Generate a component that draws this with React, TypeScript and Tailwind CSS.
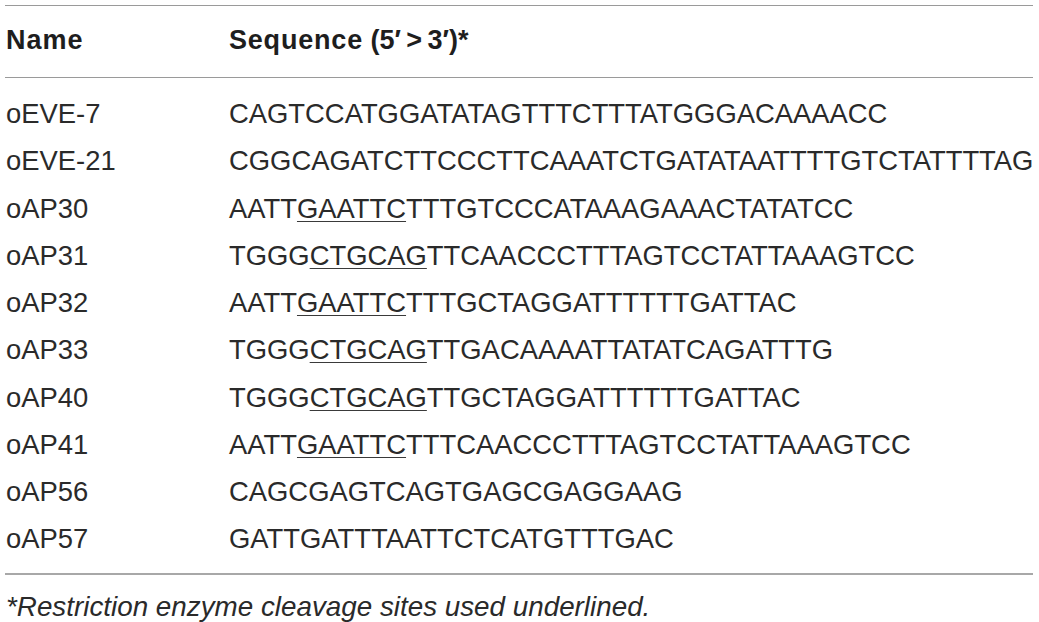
import React from "react";

type Seg = { t: string; u?: boolean };
const rows: { name: string; seq: Seg[] }[] = [
  { name: "oEVE-7", seq: [{ t: "CAGTCCATGGATATAGTTTCTTTATGGGACAAAACC" }] },
  { name: "oEVE-21", seq: [{ t: "CGGCAGATCTTCCCTTCAAATCTGATATAATTTTGTCTATTTTAG" }] },
  { name: "oAP30", seq: [{ t: "AATT" }, { t: "GAATTC", u: true }, { t: "TTTGTCCCATAAAGAAACTATATCC" }] },
  { name: "oAP31", seq: [{ t: "TGGG" }, { t: "CTGCAG", u: true }, { t: "TTCAACCCTTTAGTCCTATTAAAGTCC" }] },
  { name: "oAP32", seq: [{ t: "AATT" }, { t: "GAATTC", u: true }, { t: "TTTGCTAGGATTTTTTGATTAC" }] },
  { name: "oAP33", seq: [{ t: "TGGG" }, { t: "CTGCAG", u: true }, { t: "TTGACAAAATTATATCAGATTTG" }] },
  { name: "oAP40", seq: [{ t: "TGGG" }, { t: "CTGCAG", u: true }, { t: "TTGCTAGGATTTTTTGATTAC" }] },
  { name: "oAP41", seq: [{ t: "AATT" }, { t: "GAATTC", u: true }, { t: "TTTCAACCCTTTAGTCCTATTAAAGTCC" }] },
  { name: "oAP56", seq: [{ t: "CAGCGAGTCAGTGAGCGAGGAAG" }] },
  { name: "oAP57", seq: [{ t: "GATTGATTTAATTCTCATGTTTGAC" }] },
];

export default function App() {
  return (
    <div
      className="w-[1039px] h-[622px] bg-white overflow-hidden"
      style={{ fontFamily: '"Liberation Sans", Arial, sans-serif' }}
    >
      <div className="ml-[5px] w-[1028px] pt-[5px]">
        <div className="h-px bg-[#9a9a9a]" />
        <div className="flex h-[71px] leading-[69px] text-[27px] font-bold text-[#1e1e1e] pl-px whitespace-nowrap">
          <div className="w-[223px] tracking-[1px]">Name</div>
          <div>
            <span className="tracking-[0.8px]">Sequence</span> (5′{"\u2009"}&gt;{"\u2009"}3′)*
          </div>
        </div>
        <div className="h-px bg-[#9a9a9a]" />
        <div className="pt-[12px] pb-[10.5px] text-[27.4px] text-[#2a2a2a]">
          {rows.map((r) => (
            <div key={r.name} className="flex h-[47.25px] leading-[47px] pl-px whitespace-nowrap">
              <div className="w-[223px] shrink-0">{r.name}</div>
              <div>
                {r.seq.map((s, i) =>
                  s.u ? (
                    <span key={i} className="underline decoration-1 underline-offset-[3px] decoration-[#3a3a3a]">
                      {s.t}
                    </span>
                  ) : (
                    <span key={i}>{s.t}</span>
                  )
                )}
              </div>
            </div>
          ))}
        </div>
        <div className="h-[2px] bg-[#a8a8a8]" />
        <div className="pt-[17px] leading-[30px] text-[27.8px] italic text-[#2a2a2a] pl-px whitespace-nowrap">
          *Restriction enzyme cleavage sites used underlined.
        </div>
      </div>
    </div>
  );
}
